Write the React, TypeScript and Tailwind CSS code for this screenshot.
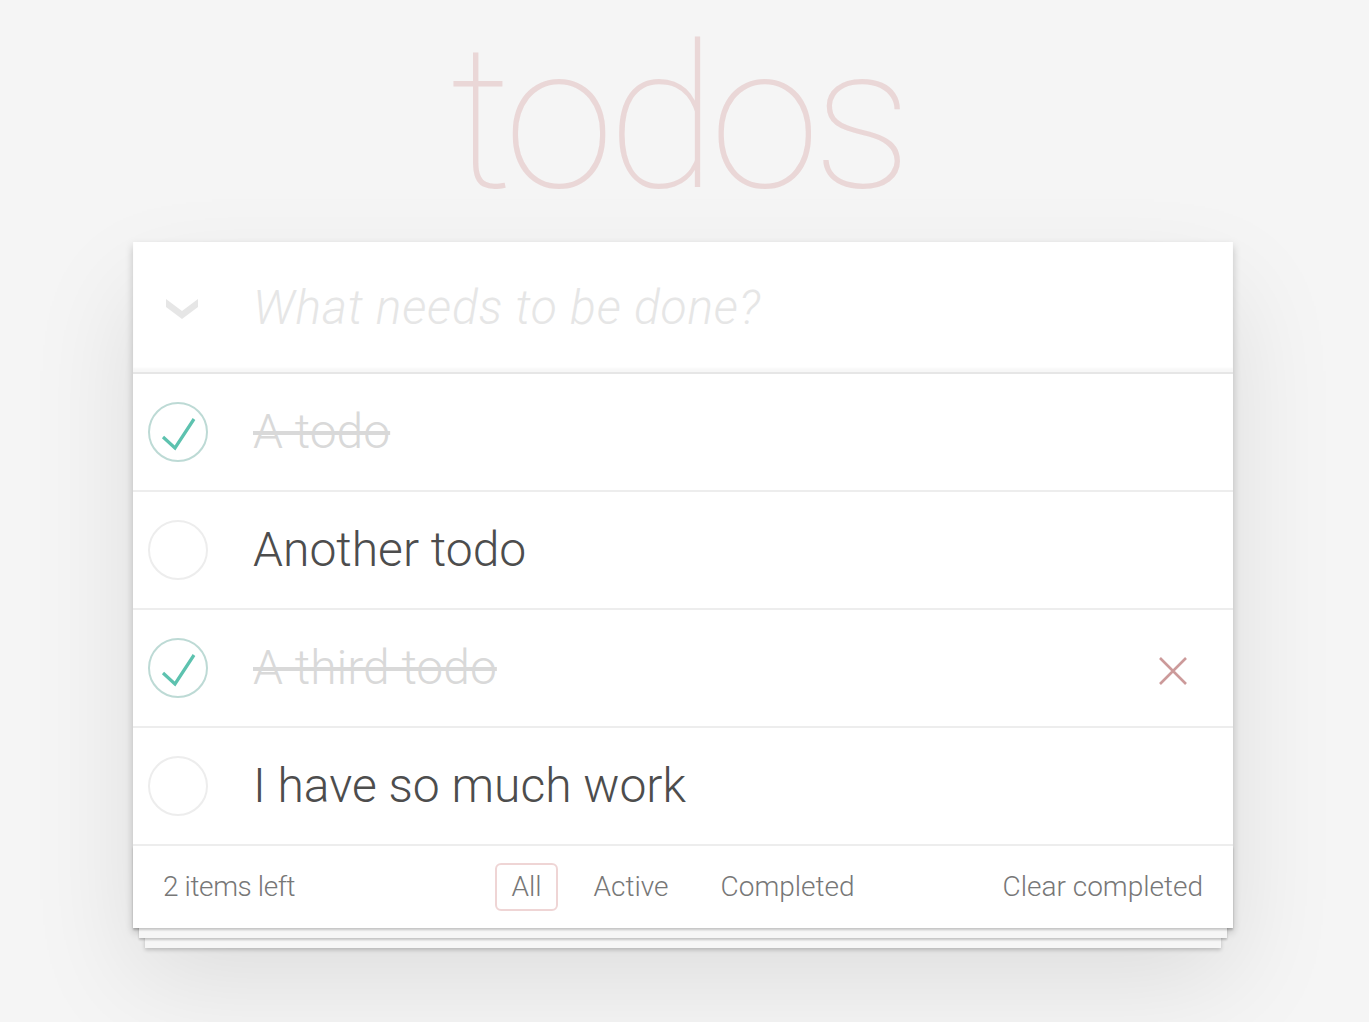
import React from "react";

type Todo = { text: string; done: boolean; hover?: boolean };

const todos: Todo[] = [
  { text: "A todo", done: true },
  { text: "Another todo", done: false },
  { text: "A third todo", done: true, hover: true },
  { text: "I have so much work", done: false },
];

function Toggle({ done }: { done: boolean }) {
  return (
    <svg width="60" height="60" viewBox="0 0 60 60" className="block">
      <circle
        cx="30"
        cy="30"
        r="29"
        fill="none"
        stroke={done ? "#bddad5" : "#ededed"}
        strokeWidth="2"
      />
      {done && (
        <polyline
          points="15,35 27,46 46,17"
          fill="none"
          stroke="#5dc2af"
          strokeWidth="3.2"
          strokeLinecap="butt"
          strokeLinejoin="miter"
        />
      )}
    </svg>
  );
}

export default function App() {
  const font = "font-['Roboto','Liberation_Sans',sans-serif]";
  return (
    <div className={`min-h-[1022px] w-full bg-[#f5f5f5] pt-[19px] ${font} font-light text-[#4d4d4d]`}>
      <div className="ml-[133px] w-[1100px] pb-[80px]">
        <h1 className="mb-[23px] h-[200px] pr-[11px] text-center text-[200px] leading-none font-thin tracking-[-7px] text-[rgba(175,47,47,0.15)]">
          todos
        </h1>
        <section className="relative bg-white shadow-[0_4px_8px_0_rgba(0,0,0,0.2),0_50px_100px_0_rgba(0,0,0,0.1)]">
          <header className="flex h-[130px] items-center shadow-[inset_0_-4px_2px_rgba(0,0,0,0.03)]">
            <div className="flex w-[120px] items-center pt-[4px] pl-[33px]">
              <svg width="32" height="20" viewBox="0 0 32 20" className="block">
                <polygon points="0,0 16,12 32,0 32,8 16,20 0,8" fill="#e6e6e6" />
              </svg>
            </div>
            <input
              className="h-full flex-1 bg-transparent pr-[32px] text-[48px] font-light text-[#4d4d4d] outline-none placeholder:italic placeholder:tracking-[0.8px] placeholder:text-[#e6e6e6]"
              placeholder="What needs to be done?"
            />
          </header>
          <ul className="border-t-2 border-[#e6e6e6]">
            {todos.map((t, i) => (
              <li
                key={i}
                className="flex h-[118px] items-center border-b-2 border-[#ededed]"
              >
                <div className="flex w-[120px] items-center pl-[15px]">
                  <Toggle done={t.done} />
                </div>
                <span
                  className={`flex-1 text-[48px] leading-[1.2] ${
                    t.done ? "text-[#d9d9d9] line-through" : "text-[#4d4d4d]"
                  }`}
                >
                  {t.text}
                </span>
                {t.hover && (
                  <div className="mt-[6px] mr-[20px] flex w-[80px] items-center justify-center">
                    <svg width="30" height="30" viewBox="0 0 30 30" className="block">
                      <path d="M2 2 L28 28 M28 2 L2 28" stroke="#cc9a9a" strokeWidth="2.6" />
                    </svg>
                  </div>
                )}
              </li>
            ))}
          </ul>
          <footer className="grid h-[82px] grid-cols-[1fr_auto_1fr] items-center px-[30px] text-[28px] text-[#777] shadow-[0_2px_2px_rgba(0,0,0,0.2),0_16px_0_-6px_#f6f6f6,0_18px_2px_-6px_rgba(0,0,0,0.2),0_32px_0_-12px_#f6f6f6,0_34px_4px_-12px_rgba(0,0,0,0.2)]">
            <span className="tracking-[-0.4px]">2 items left</span>
            <ul className="flex items-center gap-[20px]">
              <li className="rounded-[6px] border-2 border-[rgba(175,47,47,0.2)] px-[14px] py-[6px] leading-[32px]">
                All
              </li>
              <li className="rounded-[6px] border-2 border-transparent px-[14px] py-[6px] leading-[32px]">
                Active
              </li>
              <li className="rounded-[6px] border-2 border-transparent px-[14px] py-[6px] leading-[32px]">
                Completed
              </li>
            </ul>
            <span className="justify-self-end">Clear completed</span>
          </footer>
        </section>
      </div>
    </div>
  );
}
